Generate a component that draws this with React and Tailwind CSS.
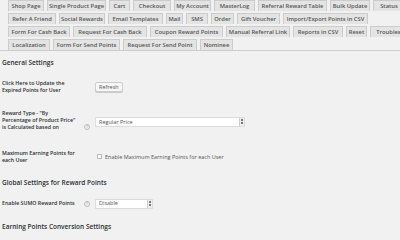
const rows = [
  [["Shop Page", 36], ["Single Product Page", 59], ["Cart", 21], ["Checkout", 38], ["My Account", 37], ["MasterLog", 41], ["Referral Reward Table", 69], ["Bulk Update", 40], ["Status", 32]],
  [["Refer A Friend", 48], ["Social Rewards", 46], ["Email Templates", 55], ["Mail", 17], ["SMS", 22], ["Order", 23], ["Gift Voucher", 43], ["Import/Export Points in CSV", 85]],
  [["Form For Cash Back", 62], ["Request For Cash Back", 74], ["Coupon Reward Points", 73], ["Manual Referral Link", 64], ["Reports in CSV", 50], ["Reset", 21], ["Troubleshoot", 50]],
  [["Localization", 42], ["Form For Send Points", 67], ["Request For Send Point", 74], ["Nominee", 33]],
];

const Help = () => (
  <span className="w-[6px] h-[6px] rounded-full border border-[#bbb] text-[4px] leading-none text-[#999] flex items-center justify-center">?</span>
);

const SelectBox = ({ value, width }) => (
  <div className={`h-[10px] ${width} bg-white border border-[#ddd] flex items-center justify-between pl-[3px]`}>
    <span className="text-[5.5px] text-[#555]">{value}</span>
    <span className="w-[5px] h-full bg-[#eee] border-l border-[#ccc] flex flex-col items-center justify-center gap-[1px]">
      <span className="block w-[2px] h-[2px] bg-[#777]" />
      <span className="block w-[2px] h-[2px] bg-[#777]" />
    </span>
  </div>
);

export default function App() {
  return (
    <div className="w-[400px] h-[240px] overflow-hidden bg-[#f1f1f1] text-[#2b2f33]" style={{ fontFamily: '"Open Sans", sans-serif' }}>
      <div className="border-b border-[#ccc] flex flex-col gap-[2px] pl-[8px]">
        {rows.map((row, i) => (
          <div key={i} className="flex gap-[3px] whitespace-nowrap">
            {row.map(([t, w]) => (
              <div key={t} style={{ width: w }} className="h-[11px] shrink-0 bg-[#e4e4e4] border border-[#ccc] border-b-0 flex items-center justify-center text-[5.8px] font-semibold text-[#555] overflow-hidden">
                {t}
              </div>
            ))}
          </div>
        ))}
      </div>

      <div className="pl-[2px]">
        <h3 className="text-[6.5px] font-semibold mt-[7px]">General Settings</h3>

        <div className="flex items-center mt-[12px]">
          <div className="w-[93px] text-[5.3px] font-semibold leading-[7px]">
            Click Here to Update the<br />Expired Points for User
          </div>
          <button className="h-[10px] px-[3px] bg-[#f7f7f7] border border-[#ccc] rounded-[2px] text-[5.5px] text-[#555] shadow-[0_1px_0_#ccc]">Refresh</button>
        </div>

        <div className="flex items-end mt-[16px]">
          <div className="w-[82px] text-[5.3px] font-semibold leading-[7px]">
            Reward Type - "By<br />Percentage of Product Price"<br />is Calculated based on
          </div>
          <div className="w-[11px] flex mb-[1px]"><Help /></div>
          <div className="mb-[4px]"><SelectBox value="Regular Price" width="w-[150px]" /></div>
        </div>

        <div className="flex items-center mt-[19px]">
          <div className="w-[95px] text-[5.3px] font-semibold leading-[7px]">
            Maximum Earning Points for<br />each User
          </div>
          <span className="w-[5px] h-[5px] bg-white border border-[#bbb] mr-[3px]" />
          <span className="text-[5.5px] text-[#555]">Enable Maximum Earning Points for each User</span>
        </div>

        <h3 className="text-[6.5px] font-semibold mt-[14px]">Global Settings for Reward Points</h3>

        <div className="flex items-center mt-[11px]">
          <div className="w-[82px] text-[5.3px] font-semibold">Enable SUMO Reward Points</div>
          <div className="w-[11px] flex"><Help /></div>
          <SelectBox value="Disable" width="w-[58px]" />
        </div>

        <h3 className="text-[6.5px] font-semibold mt-[13px]">Earning Points Conversion Settings</h3>
      </div>
    </div>
  );
}
